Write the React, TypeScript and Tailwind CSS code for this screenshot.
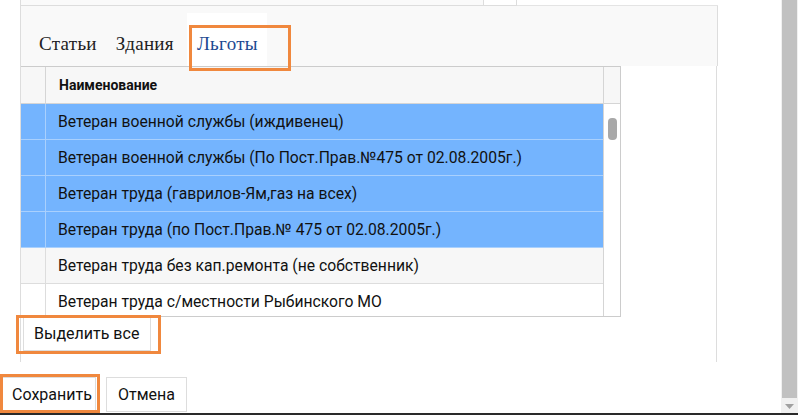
import React from "react";

const rows = [
  { t: "Ветеран военной службы (иждивенец)", sel: true },
  { t: "Ветеран военной службы (По Пост.Прав.№475 от 02.08.2005г.)", sel: true },
  { t: "Ветеран труда (гаврилов-Ям,газ на всех)", sel: true },
  { t: "Ветеран труда (по Пост.Прав.№ 475 от 02.08.2005г.)", sel: true },
  { t: "Ветеран труда без кап.ремонта (не собственник)", sel: false, alt: true },
  { t: "Ветеран труда с/местности Рыбинского МО", sel: false },
];

export default function App() {
  return (
    <div
      className="relative w-[798px] h-[415px] overflow-hidden bg-white flex"
      style={{ fontFamily: "Roboto, 'Liberation Sans', sans-serif" }}
    >
      <div className="flex-1 flex flex-col">
        {/* top strip */}
        <div className="h-[6px] flex">
          <div className="w-[20px]" />
          <div className="w-[463px] border-l border-b border-[#dddddd] bg-[#fafafa]" />
          <div className="w-[34px] border-l border-b border-r border-[#dddddd]" />
          <div className="w-[201px] border-b border-[#e4e4e4]" />
        </div>

        {/* tab header */}
        <div className="ml-[20px] w-[698px] h-[60px] bg-[#f9f9f9] border-l border-r border-[#dddddd] flex items-end">
          <div
            className="flex items-center h-[53px] pl-[18px] text-[19px] tracking-[0.3px] text-[#222]"
            style={{ fontFamily: "'Liberation Serif', 'DejaVu Serif', serif" }}
          >
            <span className="mr-[19px] pt-[9px]">Статьи</span>
            <span className="mr-[13px] pt-[9px]">Здания</span>
            <span className="h-full w-[80px] bg-white flex items-center pl-[10px] pt-[9px] text-[#1d4a92]">
              Льготы
            </span>
          </div>
        </div>

        {/* content */}
        <div className="ml-[20px] w-[697px] h-[296px] border-l border-r border-[#dddddd] flex flex-col">
          <div className="w-[600px] border border-l-0 border-[#cccccc] flex flex-col">
            {/* header */}
            <div className="h-[37px] flex bg-[#f7f7f7] border-b border-[#d5d5d5]">
              <div className="w-[25px] border-r border-[#d5d5d5]" />
              <div className="flex-1 flex items-center pl-[13px] text-[14px] font-bold text-[#111]">
                Наименование
              </div>
              <div className="w-[17px] border-l border-[#d5d5d5]" />
            </div>
            {/* body */}
            <div className="h-[212px] flex overflow-hidden">
              <div className="flex-1 flex flex-col">
                {rows.map((r, i) => (
                  <div
                    key={i}
                    className={
                      "h-[36px] shrink-0 flex border-b " +
                      (r.sel
                        ? "bg-[#74b4fe] border-[#a9d0fd]"
                        : r.alt
                        ? "bg-[#f7f7f7] border-[#dddddd]"
                        : "bg-white border-[#dddddd]")
                    }
                  >
                    <div
                      className={
                        "w-[25px] border-r " +
                        (r.sel ? "border-[#a9d0fd]" : "border-[#dddddd]")
                      }
                    />
                    <div className="flex-1 flex items-center pl-[12px] text-[15.7px] text-[#111] whitespace-nowrap">
                      {r.t}
                    </div>
                  </div>
                ))}
              </div>
              <div className="w-[17px] border-l border-[#d5d5d5] bg-white flex justify-center pt-[14px]">
                <div className="w-[9px] h-[22px] rounded-[4px] bg-[#a8a8a8]" />
              </div>
            </div>
          </div>
          <div className="pl-[2px]">
            <div className="w-[128px] h-[34px] border border-t-0 border-[#dddddd] bg-white flex items-center pl-[10px] text-[16px] text-[#111]">
              Выделить все
            </div>
          </div>
        </div>

        {/* bottom buttons */}
        <div className="mt-[15px] flex gap-[10px]">
          <div className="w-[96px] h-[35px] border border-[#dddddd] bg-white flex items-center pl-[11px] text-[16px] text-[#111]">
            Сохранить
          </div>
          <div className="w-[81px] h-[35px] border border-[#dddddd] bg-white flex items-center pl-[11px] text-[16px] text-[#111]">
            Отмена
          </div>
        </div>
      </div>

      {/* right scrollbar */}
      <div className="w-[17px] flex flex-col bg-[#f0f0f0]">
        <div className="flex-1 bg-[#c1c1c1] mx-[1px]" />
        <div className="h-[17px] flex items-center justify-center">
          <svg width="9" height="6" viewBox="0 0 9 6">
            <path d="M0 0 H9 L4.5 5 Z" fill="#a0a0a0" />
          </svg>
        </div>
      </div>

      {/* bottom dark edge */}
      <div className="absolute left-0 right-0 bottom-0 h-[2px] bg-[#2a2a2a]" />

      {/* annotation outlines */}
      <div className="absolute left-[189px] top-[25px] w-[102px] h-[46px] border-[3px] border-[#f0883e]" />
      <div className="absolute left-[16px] top-[315px] w-[145px] h-[39px] border-[3px] border-[#f0883e]" />
      <div className="absolute left-0 top-[374px] w-[100px] h-[39px] border-[3px] border-[#f0883e]" />
    </div>
  );
}
